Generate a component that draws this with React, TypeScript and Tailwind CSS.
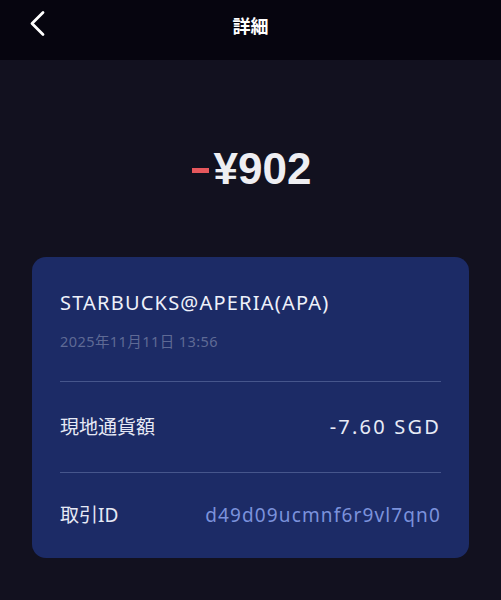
const sans = "font-['Noto_Sans','Noto_Sans_CJK_JP',sans-serif]";

function Row({ label, value, valueClass, h }: { label: string; value: string; valueClass: string; h: string }) {
  return (
    <div className={`flex items-center justify-between ${h}`}>
      <span className="text-[19px] text-[#e6e9f5]">{label}</span>
      <span className={valueClass}>{value}</span>
    </div>
  );
}

export default function App() {
  return (
    <div className={`w-[501px] h-[600px] bg-[#12111f] ${sans}`}>
      <header className="relative h-[60px] bg-[#06050f] flex items-center justify-center">
        <svg className="absolute left-[28px] top-[10px]" width="18" height="27" viewBox="0 0 18 27" fill="none">
          <path d="M15 2.5 L4 13.5 L15 24.5" stroke="white" strokeWidth="2.8" strokeLinecap="round" strokeLinejoin="round" />
        </svg>
        <h1 className="text-[18px] font-bold text-white font-['Noto_Sans_CJK_JP',sans-serif] -mt-[10px]">詳細</h1>
      </header>

      <div className="flex justify-center items-start pt-[87px] h-[197px]">
        <p className="text-[44px] font-bold leading-none font-['Liberation_Sans',sans-serif] text-[#eeeef2] flex items-center pl-[2px]">
          <span className="inline-block w-[17px] h-[5px] bg-[#e5575c] mr-[5px] mt-[2px]" />
          <span>¥902</span>
        </p>
      </div>

      <section className="mx-[32px] rounded-[14px] bg-[#1c2b66] px-[28px] pt-[31px] pb-0">
        <p className="text-[20px] text-[#eef1fa] tracking-[0.06em] leading-[30px]">STARBUCKS@APERIA(APA)</p>
        <p className="mt-[12px] text-[14.5px] text-[#5f6a95] tracking-[0.03em] leading-[22px]">2025年11月11日 13:56</p>
        <div className="mt-[29px] h-px bg-[#46568c]" />
        <Row label="現地通貨額" value="-7.60 SGD" h="h-[90px]" valueClass="text-[20px] tracking-[0.11em] text-[#e8ebf6]" />
        <div className="h-px bg-[#46568c]" />
        <Row label="取引ID" value="d49d09ucmnf6r9vl7qn0" h="h-[85px]" valueClass="text-[19px] tracking-[0.06em] text-[#7b92dc]" />
      </section>
    </div>
  );
}
